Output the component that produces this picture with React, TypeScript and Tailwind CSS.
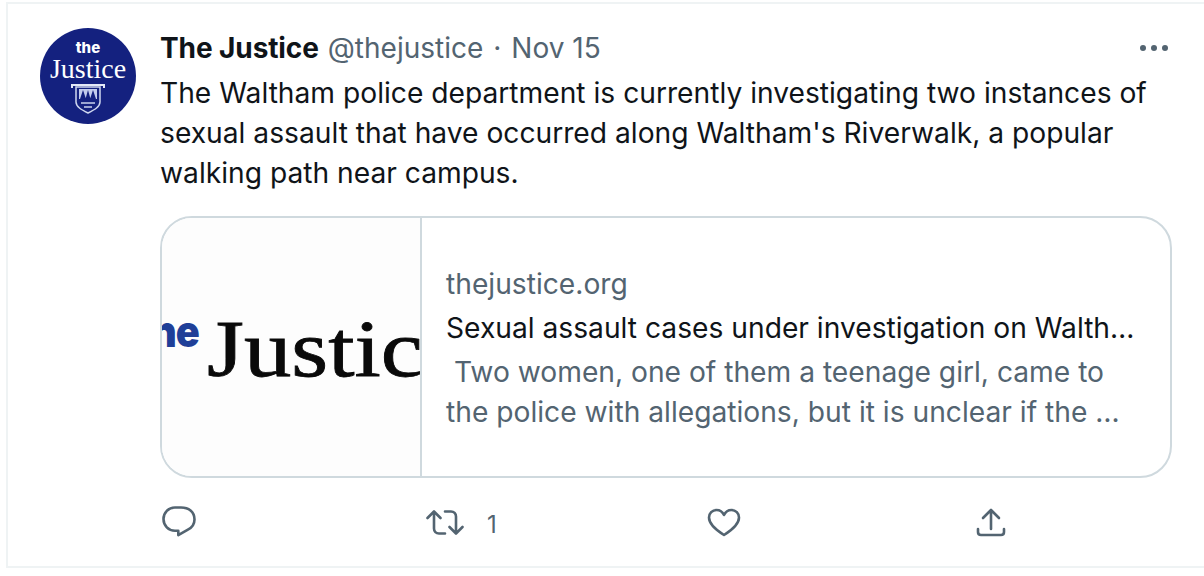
const sans = { fontFamily: 'Inter, "Noto Sans", sans-serif' };

function Avatar() {
  return (
    <div className="flex h-[96px] w-[96px] shrink-0 flex-col items-center rounded-full bg-[#14217f] pt-[13px] text-white">
      <span className="font-['Inter',sans-serif] text-[15px] font-extrabold leading-[14px]">the</span>
      <span className="font-['Liberation_Serif',serif] text-[28px] leading-[28px]">Justice</span>
      <svg width="36" height="33" viewBox="0 0 36 33" className="mt-[-1px] shrink-0">
        <path d="M2 3h32M2 2v4M34 2v4" stroke="#e4e9f7" strokeWidth="2" fill="none" />
        <path d="M6 5h24v15c0 5-6 8-12 11C12 28 6 25 6 20z" fill="#14217f" stroke="#cfd7ef" strokeWidth="1.500" />
        <path d="M9 7h18v10H9z" fill="#c3cced" />
        <path d="M10 17l3-9 3 9zM15.500 17l2.500-9 2.500 9zM20 17l3-9 3 9z" fill="#14217f" />
        <path d="M11 21h14M14 25h8" stroke="#c9d2ee" strokeWidth="1.500" />
      </svg>
    </div>
  );
}

function CardLogo() {
  return (
    <div className="flex h-full w-[258px] shrink-0 items-center overflow-hidden bg-[#fdfdfd]">
      <span
        className="mb-[32px] ml-[-11px] w-[56px] shrink-0 origin-left scale-x-[0.9] text-[44px] font-black leading-none tracking-[-1px] text-[#1f3f98]"
        style={sans}
      >
        he
      </span>
      <span className="mt-[4px] shrink-0 origin-left scale-x-[1.17] font-['Liberation_Serif',serif] text-[81px] leading-none text-[#0a0a0a] [-webkit-text-stroke:0.8px_#0a0a0a]">
        Justic
      </span>
    </div>
  );
}

function ReplyIcon() {
  return (
    <svg width="36" height="34" viewBox="0 0 36 34" fill="none" stroke="#536471" strokeWidth="2.6" strokeLinejoin="round">
      <path d="M14 2.500h6c7.500 0 13.500 4 13.500 12 0 5-2.800 8.200-6.600 10.200l-9.600 5.400v-4.400H14C7.500 25.700 2.500 20.500 2.500 14S7.500 2.500 14 2.500z" />
    </svg>
  );
}

function RetweetIcon() {
  return (
    <svg width="38" height="27" viewBox="0 0 38 27" fill="none" stroke="#536471" strokeWidth="2.6" strokeLinecap="round" strokeLinejoin="round">
      <path d="M1.500 9 8 2.500 14.500 9M8 3v16.500c0 3 2 5 5 5h6" />
      <path d="M36.500 18 30 24.500 23.500 18M30 24V7.500c0-3-2-5-5-5h-6" />
    </svg>
  );
}

function HeartIcon() {
  return (
    <svg width="34" height="29" viewBox="0 0 34 29" fill="none" stroke="#536471" strokeWidth="2.6" strokeLinejoin="round">
      <path d="M17 27C9 22 2 16 2 9.500 2 5.300 5.300 2 9.500 2c3.200 0 6 1.800 7.500 5 1.500-3.200 4.300-5 7.500-5C28.700 2 32 5.300 32 9.500 32 16 25 22 17 27z" />
    </svg>
  );
}

function ShareIcon() {
  return (
    <svg width="30" height="29" viewBox="0 0 30 29" fill="none" stroke="#536471" strokeWidth="2.6" strokeLinecap="round" strokeLinejoin="round">
      <path d="M15 2v19M7 10l8-8 8 8" />
      <path d="M2 21v3c0 2 1 3 3 3h20c2 0 3-1 3-3v-3" />
    </svg>
  );
}

export default function App() {
  return (
    <div className="h-[576px] w-full overflow-hidden bg-white pl-[6px] pt-[2px] text-[#0f1419]" style={sans}>
      <article className="flex h-[566px] gap-[24px] border-y-2 border-l-2 border-[#eff3f4] pl-[32px] pt-[24px]">
        <Avatar />
        <div className="min-w-0 flex-1">
          <div className="flex h-[40px] items-center justify-between pr-[36px] text-[28px] leading-[40px]">
            <div className="flex items-center whitespace-nowrap">
              <span className="font-bold tracking-[-0.1px]">The Justice</span>
              <span className="ml-[9px] text-[#536471]">@thejustice</span>
              <span className="mx-[10px] text-[#536471]">·</span>
              <span className="text-[#536471]">Nov 15</span>
            </div>
            <div className="flex gap-[5px]">
              <span className="h-[6px] w-[6px] rounded-full bg-[#536471]" />
              <span className="h-[6px] w-[6px] rounded-full bg-[#536471]" />
              <span className="h-[6px] w-[6px] rounded-full bg-[#536471]" />
            </div>
          </div>
          <p className="mt-[5px] whitespace-nowrap text-[28.2px] leading-[40px]">
            The Waltham police department is currently investigating two instances of
            <br />
            sexual assault that have occurred along Waltham's Riverwalk, a popular
            <br />
            walking path near campus.
          </p>
          <div className="mt-[23px] flex h-[262px] w-[1012px] overflow-hidden rounded-[32px] border-2 border-[#cfd9de]">
            <CardLogo />
            <div className="flex flex-1 flex-col justify-center border-l-2 border-[#cfd9de] pl-[24px] pt-[1px] text-[28.2px] leading-[40px]">
              <div className="text-[#536471]">thejustice.org</div>
              <div className="mt-[4px] whitespace-nowrap">Sexual assault cases under investigation on Walth…</div>
              <div className="mt-[4px] whitespace-nowrap text-[#536471]">
                &nbsp;Two women, one of them a teenage girl, came to
                <br />
                the police with allegations, but it is unclear if the …
              </div>
            </div>
          </div>
          <div className="mt-[28px] flex h-[32px] items-center pl-[1px] text-[#536471]">
            <div className="w-[265px]"><ReplyIcon /></div>
            <div className="flex w-[281px] items-center">
              <RetweetIcon />
              <span className="ml-[23px] mt-[5px] text-[24px]">1</span>
            </div>
            <div className="w-[269px]"><HeartIcon /></div>
            <ShareIcon />
          </div>
        </div>
      </article>
    </div>
  );
}
